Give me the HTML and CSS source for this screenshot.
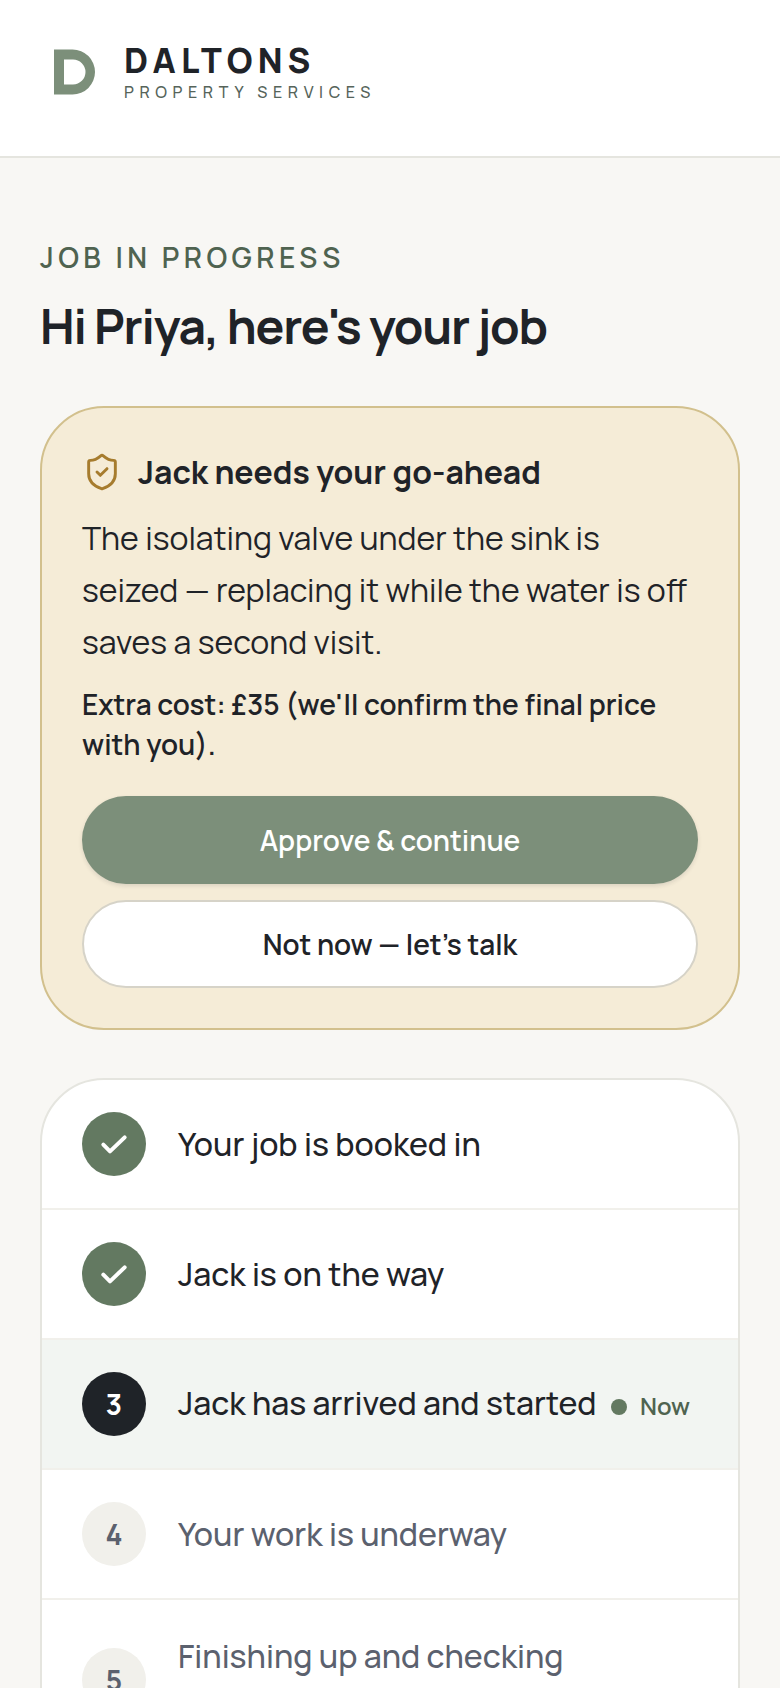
FILE: index.html
```html
<!DOCTYPE html>
<html lang="en-GB">
<head>
    <meta charset="UTF-8">
    <meta name="viewport" content="width=device-width, initial-scale=1.0">
    <title>Your job - Daltons Property Services</title>
    <link rel="stylesheet" href="styles.css">
</head>
<body>
    <header class="site-header">
        <svg class="logo" viewBox="0 0 64 64" aria-hidden="true">
            <path fill-rule="evenodd" d="M14 9.500h18.500a22.500 22.500 0 0 1 0 45H14zM24 19.500v25h9a12.500 12.500 0 0 0 0-25z"/>
        </svg>
        <div class="brand">
            <span class="brand-name">DALTONS</span>
            <span class="brand-sub">PROPERTY SERVICES</span>
        </div>
    </header>
    <main>
        <p class="eyebrow">JOB IN PROGRESS</p>
        <h1>Hi Priya, here's your job</h1>

        <section class="approval">
            <h2>
                <svg class="shield" viewBox="0 0 24 24" aria-hidden="true">
                    <path d="M20 13c0 5-3.5 7.5-7.66 8.95a1 1 0 0 1-.67-.01C7.5 20.5 4 18 4 13V6a1 1 0 0 1 1-1c2 0 4.5-1.2 6.24-2.72a1.17 1.17 0 0 1 1.52 0C14.51 3.81 17 5 19 5a1 1 0 0 1 1 1z"/>
                    <path d="m9 12 2 2 4-4"/>
                </svg>
                Jack needs your go-ahead
            </h2>
            <p class="reason">The isolating valve under the sink is seized — replacing it while the water is off saves a second visit.</p>
            <p class="cost">Extra cost: £35 (we'll confirm the final price with you).</p>
            <div class="actions">
                <button type="button" class="btn btn-primary">Approve &amp; continue</button>
                <button type="button" class="btn btn-secondary">Not now — let’s talk</button>
            </div>
        </section>

        <ol class="steps">
            <li class="step done">
                <span class="marker"><svg viewBox="0 0 24 24" aria-label="Done"><path d="M4 12.500l5 5L20 7"/></svg></span>
                <span class="label">Your job is booked in</span>
            </li>
            <li class="step done">
                <span class="marker"><svg viewBox="0 0 24 24" aria-label="Done"><path d="M4 12.500l5 5L20 7"/></svg></span>
                <span class="label">Jack is on the way</span>
            </li>
            <li class="step current">
                <span class="marker">3</span>
                <span class="label">Jack has arrived and started <span class="now">Now</span></span>
            </li>
            <li class="step">
                <span class="marker">4</span>
                <span class="label">Your work is underway</span>
            </li>
            <li class="step">
                <span class="marker">5</span>
                <span class="label">Finishing up and checking everything works</span>
            </li>
        </ol>
    </main>
</body>
</html>
```
FILE: styles.css
```css
* {
    box-sizing: border-box;
}

body {
    font-family: Manrope, Inter, sans-serif;
    margin: 0;
    background-color: #f8f7f4;
    color: #1f2328;
}

h1, h2, p, ol {
    margin: 0;
    padding: 0;
}

.site-header {
    display: flex;
    gap: 20px;
    padding: 40px 40px 52px;
    background-color: #fff;
    border-bottom: 2px solid #e5e5df;
}

.logo {
    width: 64px;
    height: 64px;
    fill: #7c8f7a;
}

.brand {
    display: flex;
    flex-direction: column;
}

.brand-name {
    font-size: 34px;
    line-height: 40px;
    font-weight: 800;
    letter-spacing: 0.15em;
}

.brand-sub {
    font-size: 16px;
    line-height: 24px;
    font-weight: 500;
    letter-spacing: 0.35em;
    color: #56645a;
}

main {
    padding: 80px 40px;
}

.eyebrow {
    font-size: 28px;
    line-height: 38px;
    font-weight: 600;
    letter-spacing: 0.16em;
    color: #4f6350;
}

h1 {
    margin-top: 22px;
    font-size: 48px;
    line-height: 56px;
    font-weight: 700;
    letter-spacing: -0.025em;
}

.approval {
    margin-top: 52px;
    padding: 40px;
    background-color: #f5ecd7;
    border: 2px solid #d2c08d;
    border-radius: 64px;
}

.approval h2 {
    display: flex;
    align-items: center;
    gap: 16px;
    font-size: 32px;
    line-height: 48px;
    font-weight: 700;
}

.shield {
    width: 40px;
    height: 40px;
    fill: none;
    stroke: #a67c2e;
    stroke-width: 1.75;
    stroke-linecap: round;
    stroke-linejoin: round;
}

.reason {
    margin-top: 16px;
    font-size: 32px;
    line-height: 52px;
    font-weight: 400;
}

.cost {
    margin-top: 16px;
    font-size: 28px;
    line-height: 40px;
    font-weight: 600;
}

.actions {
    display: grid;
    gap: 16px;
    margin-top: 32px;
}

.btn {
    height: 88px;
    border: 2px solid #d6d3c8;
    border-radius: 44px;
    background-color: #fff;
    color: #1f2328;
    font-family: inherit;
    font-size: 28px;
    font-weight: 600;
    cursor: pointer;
}

.btn-primary {
    border: none;
    background-color: #7c8f7a;
    color: #fff;
    box-shadow: 0 2px 4px rgba(31, 35, 40, 0.12);
}

.steps {
    margin-top: 48px;
    list-style: none;
    overflow: hidden;
    background-color: #fff;
    border: 2px solid #e5e5df;
    border-radius: 64px;
}

.step {
    display: flex;
    align-items: center;
    gap: 32px;
    padding: 32px 40px;
    border-bottom: 2px solid #f1f0eb;
    color: #5b616e;
}

.step:last-child {
    border-bottom: none;
}

.marker {
    display: flex;
    flex-shrink: 0;
    align-items: center;
    justify-content: center;
    width: 64px;
    height: 64px;
    border-radius: 50%;
    background-color: #f1f0eb;
    font-size: 28px;
    font-weight: 700;
}

.marker svg {
    width: 32px;
    height: 32px;
    fill: none;
    stroke: #fff;
    stroke-width: 3;
    stroke-linecap: round;
    stroke-linejoin: round;
}

.label {
    font-size: 32px;
    line-height: 48px;
    font-weight: 500;
}

.done, .current {
    color: #1f2328;
}

.done .marker {
    background-color: #637961;
}

.current {
    background-color: #f2f5f2;
}

.current .marker {
    background-color: #1f2328;
    color: #fff;
}

.now {
    margin-left: 8px;
    font-size: 24px;
    font-weight: 600;
    color: #4f6350;
    white-space: nowrap;
}

.now::before {
    content: "";
    display: inline-block;
    width: 16px;
    height: 16px;
    margin-right: 13px;
    border-radius: 50%;
    background-color: #637961;
}
```
